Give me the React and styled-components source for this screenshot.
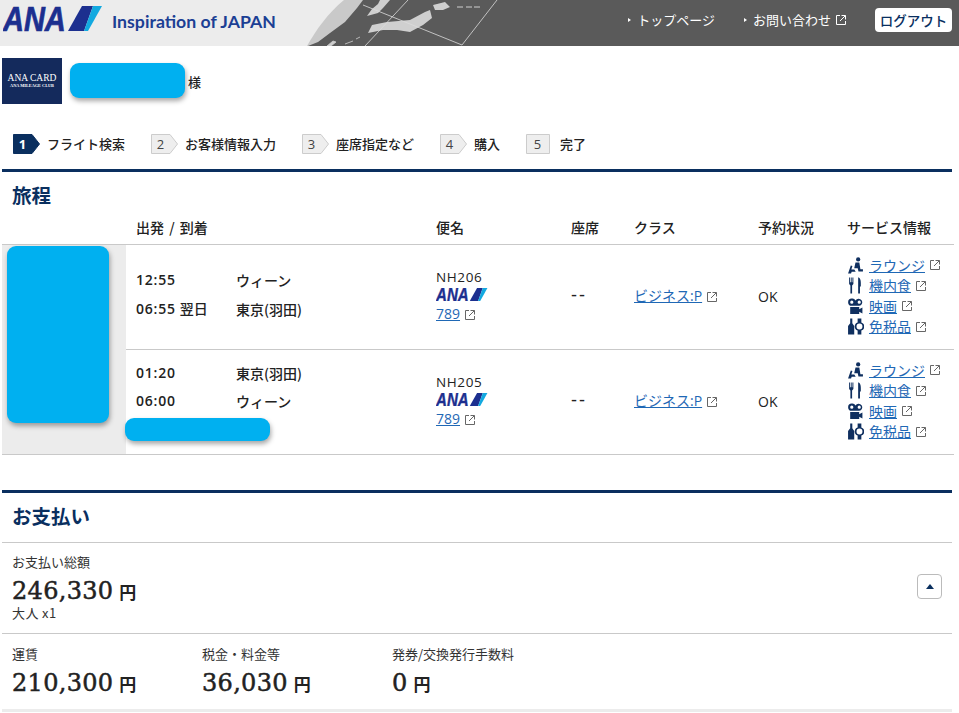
import React from 'react';
import styled, { createGlobalStyle } from 'styled-components';

const NAVY = '#0a2f5f';
const LINE = '#c9c9c9';
const JP = '"Noto Sans CJK JP", "Noto Sans", sans-serif';

const GlobalStyle = createGlobalStyle`
  html, body { margin: 0; padding: 0; background: #fff; }
  body {
    font-family: "Open Sans", ${JP};
    font-size: 13px;
    color: #222;
  }
`;

const flights = [
  { no: 'NH206', dep: '12:55', depCity: 'ウィーン', arr: '06:55', next: '翌日', arrCity: '東京(羽田)' },
  { no: 'NH205', dep: '01:20', depCity: '東京(羽田)', arr: '06:00', arrCity: 'ウィーン', extra: true },
];

const steps = ['フライト検索', 'お客様情報入力', '座席指定など', '購入', '完了'];

function ExtIcon() {
  return (
    <ExtSvg viewBox="0 0 10 10">
      <path d="M4 .5H.5v9h9V6M5.500.5h4v4M9.300.7 4 6" fill="none" stroke="#666" strokeWidth="1" />
    </ExtSvg>
  );
}

function AnaLogo({ width }) {
  return (
    <svg width={width} viewBox="0 0 100 25.500" style={{ display: 'block' }}>
      <text transform="scale(1 1.200)" x="0" y="20.800" fontFamily="Liberation Sans" fontWeight="700" fontStyle="italic" fontSize="29" fill="#1c2f8f" stroke="#1c2f8f" strokeWidth=".6">ANA</text>
      <polygon points="65,25 79,0 90,0 81,25" fill="#1c2f8f" />
      <polygon points="81,25 90,0 99,0 85,25" fill="#12a9e0" />
    </svg>
  );
}

function Lounge() {
  return (
    <IconSvg viewBox="0 0 16 16">
      <circle cx="10.500" cy="2.300" r="2" />
      <path d="M8 5.200h3.600l1 6.300h2.400v2.200h-4.200l-.7-3.200H6.800z" />
      <path d="M1 15.500 3.600 8l1.500.5-1 3.300h2.800l1.300 2H4.400l-.6 1.700z" />
    </IconSvg>
  );
}

function Meal() {
  return (
    <IconSvg viewBox="0 0 16 16">
      <path d="M2 .5h.9v4.500h.7V.5h.8v4.500h.7V.5H6v6L4.800 8v7.500H3.200V8L2 6.500z" />
      <path d="M10.500.5c1.800 0 2.500 2.500 2.500 5V9h-.8v6.500h-1.700z" />
    </IconSvg>
  );
}

function Movie() {
  return (
    <IconSvg viewBox="0 0 16 16">
      <path fillRule="evenodd" d="M4.500.5A3.400 3.400 0 0 1 8 2.300 3.400 3.400 0 1 1 11.500 7.400H4.500A3.450 3.450 0 0 1 4.500.5zM4.500 2.400a1.500 1.500 0 1 0 0 3 1.500 1.500 0 0 0 0-3zM11.500 2.400a1.500 1.500 0 1 0 0 3 1.500 1.500 0 0 0 0-3z" />
      <path d="M3 8.500h8.500v2l3-1.500v5.500l-3-1.500v2H3z" />
    </IconSvg>
  );
}

function DutyFree() {
  return (
    <IconSvg viewBox="0 0 16 16">
      <path d="M3 .5h2v4.500l1.800 2.500V15.500H1V7.500L3 5z" />
      <path fillRule="evenodd" d="M10 .5h3.500v3.700a4 4 0 0 1 0 7.600v3.700H10v-3.700a4 4 0 0 1 0-7.600zM11.750 5.200a2.800 2.800 0 1 0 0 5.600 2.800 2.800 0 0 0 0-5.600z" />
    </IconSvg>
  );
}

const services = [
  { label: 'ラウンジ', Icon: Lounge },
  { label: '機内食', Icon: Meal },
  { label: '映画', Icon: Movie },
  { label: '免税品', Icon: DutyFree },
];

function Globe() {
  return (
    <GlobeSvg viewBox="300 0 200 46">
      <path d="M307 46C316 30 328 13 344 0H363V46z" fill="#c9c9c9" />
      <path d="M363 0 357 8 345 22 330 33 318 42 308 46H500V0z" fill="#5a5a5a" />
      <path d="M368 33 372 25 387 22 410 20 425 12 430 10 432 18 423 25 410 32 397 30 383 30z" fill="#cfcfcf" />
      <path d="M433 5 445 2 450 7 443 10 435 10zM367 16 372 9 378 4 380 0H390L383 8 378 13z" fill="#cfcfcf" />
      <path d="M327 46 333 41 336 42 331 46zM345 44l8-3M356 39l4-2" fill="#cfcfcf" stroke="#cfcfcf" strokeWidth=".8" />
      <path d="M457 7h8M466 7h16" stroke="#cfcfcf" strokeWidth="1" strokeDasharray="6 2" />
      <path d="M363 5 462 45M408 0 365 46M497 0 462 45" stroke="#dcdcdc" strokeWidth=".8" fill="none" />
    </GlobeSvg>
  );
}

function Amount({ value, gap }) {
  return (
    <AmountText $gap={gap}>
      {value}<Yen>円</Yen>
    </AmountText>
  );
}

function StepBadge({ n, active }) {
  const last = n === 5;
  return (
    <Badge>
      <svg width="28" height="20" viewBox="0 0 28 20">
        <polygon
          points={last ? '.5,.5 23.500,.5 23.500,19.500 .5,19.500' : '.5,.5 19,.5 26.500,10 19,19.500 .5,19.500'}
          fill={active ? NAVY : '#eee'}
          stroke={active ? NAVY : '#ccc'}
        />
      </svg>
      <BadgeNum $active={active} $last={last}>{n}</BadgeNum>
    </Badge>
  );
}

export default function App() {
  return (
    <Page>
      <GlobalStyle />
      <Header>
        <Globe />
        <Brand>
          <AnaLogo width={100} />
          <Tagline>Inspiration of JAPAN</Tagline>
        </Brand>
        <HeaderNav>
          <NavLink>トップページ</NavLink>
          <NavLink>お問い合わせ<NavExt viewBox="0 0 10 10"><path d="M4 .5H.5v9h9V6M5.500.5h4v4M9.300.7 4 6" fill="none" stroke="#fff" /></NavExt></NavLink>
          <Logout>ログアウト</Logout>
        </HeaderNav>
      </Header>

      <UserRow>
        <CardTile>
          <CardName>ANA CARD</CardName>
          <CardSub>ANA MILEAGE CLUB</CardSub>
        </CardTile>
        <NameBlock />
        <Sama>様</Sama>
      </UserRow>

      <Steps>
        {steps.map((s, i) => (
          <Step key={s}>
            <StepBadge n={i + 1} active={i === 0} />
            <StepLabel>{s}</StepLabel>
          </Step>
        ))}
      </Steps>

      <Section>
        <Title>旅程</Title>
        <HeadRow>
          <span />
          <HeadCell>出発 / 到着</HeadCell>
          <HeadCell>便名</HeadCell>
          <HeadCell>座席</HeadCell>
          <HeadCell>クラス</HeadCell>
          <HeadCell>予約状況</HeadCell>
          <HeadCell>サービス情報</HeadCell>
        </HeadRow>
        <Trip>
          <DateCol>
            <DateBlock />
            <RouteBlock />
          </DateCol>
          <div>
            {flights.map((f) => (
              <FlightRow key={f.no}>
                <Times $extra={f.extra}>
                  <TimeText>{f.dep}</TimeText>
                  <City>{f.depCity}</City>
                  <TimeText>{f.arr}{f.next && <NextDay>{f.next}</NextDay>}</TimeText>
                  <City>{f.arrCity}</City>
                </Times>
                <FlightCell>
                  <FlightNo>{f.no}</FlightNo>
                  <AnaLogo width={52} />
                  <div><BlueLink>789</BlueLink><ExtIcon /></div>
                </FlightCell>
                <Seat>--</Seat>
                <ClassCell><BlueLink>ビジネス:P</BlueLink><ExtIcon /></ClassCell>
                <Status>OK</Status>
                <ServiceList>
                  {services.map(({ label, Icon }) => (
                    <Service key={label}>
                      <Icon />
                      <BlueLink>{label}</BlueLink>
                      <ExtIcon />
                    </Service>
                  ))}
                </ServiceList>
              </FlightRow>
            ))}
          </div>
        </Trip>
      </Section>

      <PaySection>
        <PayTitle>お支払い</PayTitle>
        <TotalBlock>
          <div>
            <Label>お支払い総額</Label>
            <Amount value="246,330" gap={8} />
            <Adult>大人 x1</Adult>
          </div>
          <ToggleButton><Triangle /></ToggleButton>
        </TotalBlock>
        <Breakdown>
          <div>
            <Label>運賃</Label>
            <Amount value="210,300" gap={8} />
          </div>
          <div>
            <Label>税金・料金等</Label>
            <Amount value="36,030" gap={8} />
          </div>
          <div>
            <Label>発券/交換発行手数料</Label>
            <Amount value="0" gap={8} />
          </div>
        </Breakdown>
      </PaySection>
      <FootBar />
    </Page>
  );
}

const Page = styled.div`
  width: 959px;
  height: 713px;
  overflow: hidden;
`;

const Header = styled.header`
  position: relative;
  height: 46px;
  background: linear-gradient(90deg, #ececec 0 400px, #5a5a5a 400px);
  display: flex;
  justify-content: space-between;
`;

const GlobeSvg = styled.svg`
  position: absolute;
  left: 300px;
  top: 0;
  width: 200px;
  height: 46px;
`;

const Brand = styled.div`
  position: relative;
  display: flex;
  align-items: flex-start;
  gap: 9px;
  padding: 6px 0 0 3px;
`;

const Tagline = styled.span`
  font-family: Lato, "Open Sans", sans-serif;
  font-size: 17.700px;
  font-weight: 700;
  line-height: 22px;
  margin-top: 5px;
  color: #1c3f94;
  white-space: nowrap;
`;

const HeaderNav = styled.nav`
  position: relative;
  display: flex;
  align-items: center;
  align-self: flex-start;
  padding: 8px 7px 0 0;
`;

const NavLink = styled.a`
  font-family: ${JP};
  font-size: 13px;
  line-height: 24px;
  color: #fff;
  margin-right: 29px;
  display: flex;
  align-items: center;
  &::before {
    content: '';
    border-left: 3px solid #fff;
    border-top: 2.500px solid transparent;
    border-bottom: 2.500px solid transparent;
    margin-right: 6px;
  }
`;

const NavExt = styled.svg`
  width: 10px;
  height: 10px;
  margin-left: 5px;
`;

const Logout = styled.button`
  width: 77px;
  height: 24px;
  padding: 0;
  border: 0;
  border-radius: 4px;
  background: #fff;
  color: ${NAVY};
  font-family: ${JP};
  font-size: 13.500px;
  font-weight: 500;
`;

const UserRow = styled.div`
  display: flex;
  align-items: center;
  height: 46px;
  margin: 12px 0 0 2px;
  gap: 8px;
`;

const CardTile = styled.div`
  width: 60px;
  height: 46px;
  background: #142a5c;
  color: #fff;
  display: flex;
  flex-direction: column;
  align-items: center;
  justify-content: center;
  font-family: "Liberation Serif", serif;
  box-sizing: border-box;
`;

const CardName = styled.span`
  font-size: 9.500px;
  line-height: 9px;
  white-space: nowrap;
`;

const CardSub = styled.span`
  font-size: 4.300px;
  font-weight: 700;
  line-height: 5px;
  white-space: nowrap;
`;

const Redact = styled.div`
  background: #00b0f0;
  border-radius: 9px;
  box-shadow: 1px 3px 5px rgba(0, 0, 0, 0.35);
`;

const NameBlock = styled(Redact)`
  width: 115px;
  height: 35px;
  margin-top: -2px;
`;

const Sama = styled.span`
  font-family: ${JP};
  font-size: 13px;
  font-weight: 500;
  margin-left: -5px;
`;

const Steps = styled.ol`
  list-style: none;
  margin: 30px 0 0;
  padding: 0 0 0 13px;
  display: flex;
  height: 20px;
  gap: 26px;
`;

const Step = styled.li`
  display: flex;
  align-items: center;
`;

const Badge = styled.div`
  display: grid;
  width: 28px;
  height: 20px;
  margin-right: 6px;
  & > * { grid-area: 1 / 1; }
`;

const BadgeNum = styled.span`
  width: ${(p) => (p.$last ? 23 : 19)}px;
  text-align: center;
  line-height: 20px;
  font-size: 13px;
  font-weight: ${(p) => (p.$active ? 700 : 400)};
  color: ${(p) => (p.$active ? '#fff' : '#444')};
`;

const StepLabel = styled.span`
  font-family: ${JP};
  font-size: 13px;
  font-weight: 500;
  margin-top: -2px;
  color: #222;
  white-space: nowrap;
`;

const Section = styled.section`
  margin: 15px 7px 0 2px;
  border-top: 3px solid ${NAVY};
  width: 950px;
`;

const Title = styled.h2`
  margin: 0;
  padding-left: 10px;
  font-family: ${JP};
  font-size: 19.500px;
  line-height: 46px;
  height: 40px;
  font-weight: 700;
  color: ${NAVY};
`;

const HeadRow = styled.div`
  display: grid;
  grid-template-columns: 134px 300px 135px 63px 124px 89px 1fr;
  height: 33px;
  width: 952px;
  align-items: center;
  border-bottom: 1px solid ${LINE};
  box-sizing: border-box;
  padding-bottom: 3px;
`;

const HeadCell = styled.div`
  font-family: ${JP};
  font-size: 14px;
  font-weight: 500;
  word-spacing: 2px;
  color: #222;
`;

const Trip = styled.div`
  position: relative;
  display: grid;
  grid-template-columns: 124px 1fr;
  width: 952px;
  border-bottom: 1px solid ${LINE};
`;

const DateCol = styled.div`
  background: #ececec;
`;

const DateBlock = styled(Redact)`
  position: absolute;
  left: 5px;
  top: 1px;
  width: 102px;
  height: 177px;
`;

const RouteBlock = styled(Redact)`
  position: absolute;
  left: 123px;
  top: 173px;
  width: 145px;
  height: 23px;
`;

const FlightRow = styled.div`
  display: grid;
  grid-template-columns: 300px 135px 63px 124px 89px 1fr;
  height: 104px;
  padding-left: 10px;
  align-items: center;
  box-sizing: border-box;
  & + & { height: 105px; border-top: 1px solid ${LINE}; }
`;

const Times = styled.div`
  display: grid;
  grid-template-columns: 100px 1fr;
  row-gap: 8px;
  align-items: center;
  margin-top: -5px;
  padding-bottom: ${(p) => (p.$extra ? 26 : 0)}px;
`;

const TimeText = styled.span`
  font-family: "Open Sans", ${JP};
  font-size: 14px;
  font-weight: 600;
  line-height: 20px;
  white-space: nowrap;
  letter-spacing: .8px;
`;

const NextDay = styled.span`
  font-family: ${JP};
  font-weight: 500;
  letter-spacing: 0;
  margin-left: 4px;
`;

const City = styled.span`
  font-family: ${JP};
  font-size: 14px;
  font-weight: 500;
  line-height: 20px;
`;

const FlightCell = styled.div`
  display: flex;
  flex-direction: column;
  gap: 4px;
  margin-top: -1px;
`;

const FlightNo = styled.span`
  font-size: 13.500px;
  line-height: 14px;
  letter-spacing: .6px;
`;

const BlueLink = styled.a`
  font-family: "Open Sans", ${JP};
  font-size: 14px;
  line-height: 15px;
  color: #1f68b5;
  text-decoration: underline;
  white-space: nowrap;
`;

const ExtSvg = styled.svg`
  width: 10px;
  height: 10px;
  margin-left: 5px;
  vertical-align: -1px;
`;

const Seat = styled.span`
  font-family: "Liberation Sans", sans-serif;
  font-size: 18px;
  letter-spacing: 2px;
  margin-top: -3px;
`;

const ClassCell = styled.div`
  margin-top: -2px;
`;

const Status = styled.span`
  font-size: 14px;
  margin-top: -2px;
`;

const ServiceList = styled.ul`
  list-style: none;
  margin: -2px 0 0;
  padding: 0;
  display: flex;
  flex-direction: column;
`;

const Service = styled.li`
  display: flex;
  align-items: center;
  height: 20.500px;
  white-space: nowrap;
`;

const IconSvg = styled.svg`
  width: 17px;
  height: 17px;
  margin-right: 5px;
  fill: #0f2f5f;
  flex: none;
`;

const PaySection = styled.section`
  width: 950px;
  margin: 35px 0 0 2px;
  border-top: 3px solid ${NAVY};
`;

const PayTitle = styled.h2`
  margin: 0;
  padding-left: 10px;
  height: 49px;
  font-family: ${JP};
  font-size: 19.500px;
  line-height: 46px;
  font-weight: 700;
  color: ${NAVY};
  border-bottom: 1px solid ${LINE};
`;

const TotalBlock = styled.div`
  display: flex;
  align-items: center;
  justify-content: space-between;
  box-sizing: border-box;
  height: 91px;
  padding: 0 10px 2px;
  border-bottom: 1px solid ${LINE};
`;

const Label = styled.div`
  font-family: ${JP};
  font-size: 13px;
  line-height: 14px;
  color: #333;
`;

const AmountText = styled.div`
  font-family: "DejaVu Serif", serif;
  font-size: 24px;
  font-weight: 500;
  line-height: 28px;
  letter-spacing: .3px;
  margin-top: ${(p) => p.$gap}px;
  color: #222;
  -webkit-text-stroke: .5px #222;
`;

const Yen = styled.span`
  font-family: ${JP};
  font-size: 17px;
  font-weight: 700;
  margin-left: 6px;
  -webkit-text-stroke: 0;
`;

const Adult = styled.div`
  font-family: ${JP};
  font-size: 13px;
  line-height: 14px;
  letter-spacing: .4px;
  color: #333;
`;

const ToggleButton = styled.button`
  width: 25px;
  height: 25px;
  padding: 0;
  margin-top: -2px;
  background: #fff;
  border: 1px solid #bbb;
  border-radius: 4px;
  display: flex;
  align-items: center;
  justify-content: center;
`;

const Triangle = styled.span`
  border-left: 4.500px solid transparent;
  border-right: 4.500px solid transparent;
  border-bottom: 5px solid ${NAVY};
`;

const Breakdown = styled.div`
  display: grid;
  grid-template-columns: 190px 190px 1fr;
  padding: 13px 10px 0;
  height: 62px;
`;

const FootBar = styled.div`
  width: 950px;
  height: 3px;
  margin: 0 0 0 2px;
  background: #ececec;
`;
